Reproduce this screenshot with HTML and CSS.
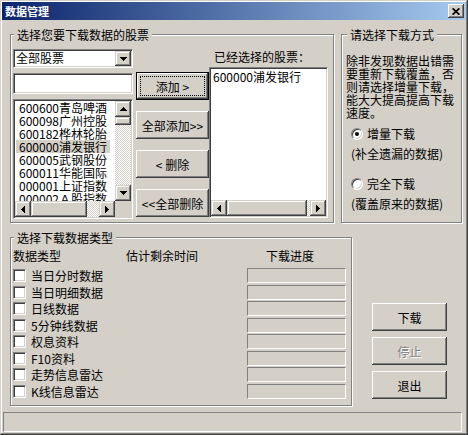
FILE: index.html
```html
<!DOCTYPE html>
<html lang="zh-CN">
<head>
<meta charset="utf-8">
<title>数据管理</title>
<link rel="stylesheet" href="styles.css">
</head>
<body>
<div class="window">
  <div class="titlebar">
    <span class="title">数据管理</span>
    <span class="close"><svg width="8" height="7" viewBox="0 0 8 7"><path d="M0.6 0.3 L7.4 6.7 M7.4 0.3 L0.6 6.7" stroke="#000" stroke-width="1.7" fill="none"/></svg></span>
  </div>

  <div class="top-row">
    <div class="group g-stocks">
      <div class="legend">选择您要下载数据的股票</div>
      <div class="stocks-body">
        <div class="col-left">
          <div class="combo">
            <span class="combo-text">全部股票</span>
            <span class="sb-btn combo-btn"><svg width="7" height="4" viewBox="0 0 7 4"><polygon points="0,0 7,0 3.5,4" fill="#000"/></svg></span>
          </div>
          <div class="edit"></div>
          <div class="listbox lb-left">
            <div class="lb-items">
              <div class="item">600600青岛啤酒</div>
              <div class="item">600098广州控股</div>
              <div class="item">600182桦林轮胎</div>
              <div class="item selected">600000浦发银行</div>
              <div class="item">600005武钢股份</div>
              <div class="item">600011华能国际</div>
              <div class="item">000001上证指数</div>
              <div class="item">000002Ａ股指数</div>
            </div>
            <div class="vscroll">
              <span class="sb-btn"><svg width="7" height="4" viewBox="0 0 7 4"><polygon points="3.5,0 7,4 0,4" fill="#000"/></svg></span>
              <span class="sb-thumb thumb-v"></span>
              <span class="sb-track"></span>
              <span class="sb-btn"><svg width="7" height="4" viewBox="0 0 7 4"><polygon points="0,0 7,0 3.5,4" fill="#000"/></svg></span>
            </div>
            <div class="hscroll">
              <span class="sb-btn"><svg width="4" height="7" viewBox="0 0 4 7"><polygon points="0,3.5 4,0 4,7" fill="#000"/></svg></span>
              <span class="sb-thumb thumb-left"></span>
              <span class="sb-track"></span>
              <span class="sb-btn"><svg width="4" height="7" viewBox="0 0 4 7"><polygon points="0,0 4,3.5 0,7" fill="#000"/></svg></span>
            </div>
            <div class="sb-corner"></div>
          </div>
        </div>

        <div class="col-buttons">
          <button class="btn default"><span class="focus">添加 &gt;</span></button>
          <button class="btn">全部添加&gt;&gt;</button>
          <button class="btn">&lt; 删除</button>
          <button class="btn">&lt;&lt;全部删除</button>
        </div>

        <div class="col-right">
          <div class="sel-label">已经选择的股票：</div>
          <div class="listbox lb-right">
            <div class="lb-items">
              <div class="item plain">600000浦发银行</div>
            </div>
            <div class="hscroll">
              <span class="sb-btn"><svg width="4" height="7" viewBox="0 0 4 7"><polygon points="0,3.5 4,0 4,7" fill="#000"/></svg></span>
              <span class="sb-thumb thumb-right"></span>
              <span class="sb-track"></span>
              <span class="sb-btn"><svg width="4" height="7" viewBox="0 0 4 7"><polygon points="0,0 4,3.5 0,7" fill="#000"/></svg></span>
            </div>
          </div>
        </div>
      </div>
    </div>

    <div class="group g-mode">
      <div class="legend legend-mode">请选择下载方式</div>
      <p class="mode-note">除非发现数据出错需<br>要重新下载覆盖，否<br>则请选择增量下载，<br>能大大提高提高下载<br>速度。</p>
      <div class="radio-row r1"><span class="radio checked"></span><span>增量下载</span></div>
      <div class="radio-desc d1">(补全遗漏的数据)</div>
      <div class="radio-row r2"><span class="radio"></span><span>完全下载</span></div>
      <div class="radio-desc d2">(覆盖原来的数据)</div>
    </div>
  </div>

  <div class="bottom-row">
    <div class="group g-types">
      <div class="legend">选择下载数据类型</div>
      <div class="types-head">
        <span class="h1">数据类型</span>
        <span class="h2">估计剩余时间</span>
        <span class="h3">下载进度</span>
      </div>
      <div class="types-grid">
        <div class="type"><span class="check"></span>当日分时数据</div><span class="bar"></span>
        <div class="type"><span class="check"></span>当日明细数据</div><span class="bar"></span>
        <div class="type"><span class="check"></span>日线数据</div><span class="bar"></span>
        <div class="type"><span class="check"></span>5分钟线数据</div><span class="bar"></span>
        <div class="type"><span class="check"></span>权息资料</div><span class="bar"></span>
        <div class="type"><span class="check"></span>F10资料</div><span class="bar"></span>
        <div class="type"><span class="check"></span>走势信息雷达</div><span class="bar"></span>
        <div class="type"><span class="check"></span>K线信息雷达</div><span class="bar"></span>
      </div>
    </div>

    <div class="actions">
      <button class="btn wide">下载</button>
      <button class="btn wide disabled">停止</button>
      <button class="btn wide">退出</button>
    </div>
  </div>

  <div class="statusbar"></div>
</div>
</body>
</html>
```

FILE: styles.css
```css
* { box-sizing: border-box; }

html, body {
  margin: 0;
  padding: 0;
}

body {
  width: 468px;
  height: 435px;
  overflow: hidden;
  background: #d4d0c8;
  color: #000;
  font-family: "Noto Sans CJK SC", "Noto Sans", sans-serif;
  font-size: 12px;
  line-height: 13px;
}

.window {
  width: 468px;
  height: 435px;
  padding: 2px;
  background: #d4d0c8;
  display: flex;
  flex-direction: column;
  box-shadow: inset -1px -1px #404040, inset 1px 1px #d4d0c8,
              inset -2px -2px #808080, inset 2px 2px #fff;
}

/* ---------- title bar ---------- */
.titlebar {
  flex: none;
  height: 18px;
  display: flex;
  align-items: center;
  background: linear-gradient(to right, #0a246a, #a6caf0);
}

.title {
  color: #fff;
  font-weight: bold;
  font-size: 11px;
  padding-left: 3px;
  letter-spacing: 0;
}

.close {
  margin-left: auto;
  margin-right: 2px;
  width: 16px;
  height: 14px;
  display: flex;
  align-items: center;
  justify-content: center;
  background: #d4d0c8;
  box-shadow: inset -1px -1px #404040, inset 1px 1px #fff,
              inset -2px -2px #808080, inset 2px 2px #d4d0c8;
}

.close svg { display: block; }

/* ---------- group boxes ---------- */
.group {
  border: 1px solid #808080;
  box-shadow: inset 1px 1px #fff, 1px 1px #fff;
}

.legend {
  width: max-content;
  height: 13px;
  margin: -7px 0 0 3px;
  padding: 0 3px;
  background: #d4d0c8;
}

.legend-mode { margin-left: 5px; }

.top-row {
  display: flex;
  gap: 7px;
  margin: 14px 0 0 8px;
}

.g-stocks {
  width: 324px;
  height: 189px;
}

.g-mode {
  width: 121px;
  height: 189px;
}

.stocks-body {
  display: flex;
  align-items: flex-start;
  margin-top: 8px;
  padding-left: 2px;
}

/* ---------- sunken fields ---------- */
.combo, .edit, .listbox {
  background: #fff;
  border: 1px solid;
  border-color: #808080 #fff #fff #808080;
  box-shadow: inset 1px 1px #404040, inset -1px -1px #d4d0c8;
  padding: 1px;
}

.col-left {
  width: 120px;
  display: flex;
  flex-direction: column;
}

.combo {
  height: 19px;
  display: flex;
  align-items: stretch;
}

.combo-text {
  flex: 1;
  padding-left: 1px;
  line-height: 14px;
}

.combo-btn {
  width: 16px;
}

.edit {
  height: 21px;
  margin-top: 5px;
}

.listbox {
  display: grid;
}

.lb-left {
  width: 120px;
  height: 120px;
  margin-top: 5px;
  grid-template-columns: 1fr 16px;
  grid-template-rows: 1fr 16px;
}

.lb-items {
  overflow: hidden;
  white-space: nowrap;
  min-width: 0;
  min-height: 0;
}

.item {
  width: 94px;
  height: 13px;
  margin-left: 1px;
  padding-left: 3px;
}

.item.selected { background: #d4d0c8; }

.item.plain {
  margin-left: 0;
  padding-left: 2px;
  margin-top: 1px;
  width: auto;
}

/* ---------- scroll bars ---------- */
.vscroll {
  display: flex;
  flex-direction: column;
}

.hscroll {
  display: flex;
}

.sb-btn, .sb-thumb {
  flex: none;
  width: 16px;
  height: 16px;
  background: #d4d0c8;
  display: flex;
  align-items: center;
  justify-content: center;
  box-shadow: inset -1px -1px #404040, inset 1px 1px #d4d0c8,
              inset -2px -2px #808080, inset 2px 2px #fff;
}

.combo-btn { height: auto; }

.sb-btn svg { display: block; shape-rendering: crispEdges; }

.thumb-v { height: 8px; }
.thumb-left { width: 56px; }
.thumb-right { width: 80px; }

.sb-track {
  flex: 1;
  background: repeating-conic-gradient(#fff 0 25%, #d4d0c8 0 50%) 0 0 / 2px 2px;
}

.sb-corner { background: #d4d0c8; }

/* ---------- buttons ---------- */
.btn {
  width: 73px;
  height: 28px;
  padding: 0;
  border: 0;
  background: #d4d0c8;
  color: #000;
  font: inherit;
  line-height: 13px;
  display: flex;
  align-items: center;
  justify-content: center;
  box-shadow: inset -1px -1px #404040, inset 1px 1px #fff,
              inset -2px -2px #808080, inset 2px 2px #d4d0c8;
}

.btn.default {
  border: 1px solid #000;
  box-shadow: inset -1px -1px #404040, inset 1px 1px #fff,
              inset -2px -2px #808080, inset 2px 2px #d4d0c8;
  padding: 3px;
  align-items: stretch;
}

.focus {
  flex: 1;
  display: flex;
  align-items: center;
  justify-content: center;
  border: 1px dotted #000;
}

.col-buttons {
  display: flex;
  flex-direction: column;
  gap: 11px;
  margin-left: 3px;
  margin-top: 23px;
}

.col-right {
  width: 119px;
}

.sel-label {
  padding-left: 5px;
  margin-top: 1px;
  height: 13px;
}

.lb-right {
  width: 119px;
  height: 151px;
  margin-top: 4px;
  grid-template-rows: 1fr 16px;
}

/* ---------- download mode ---------- */
.mode-note {
  margin: 13px 0 0 4px;
  white-space: nowrap;
}

.radio-row {
  display: flex;
  align-items: center;
  gap: 4px;
  height: 13px;
  padding-left: 9px;
}

.r1 { margin-top: 8px; }
.r2 { margin-top: 17px; }

.radio-desc {
  padding-left: 9px;
  height: 13px;
  margin-top: 7px;
}

.radio {
  width: 12px;
  height: 12px;
  border-radius: 50%;
  background: #fff;
  border: 1px solid;
  border-color: #808080 #fff #fff #808080;
  box-shadow: inset 1px 1px #404040, inset -1px -1px #d4d0c8;
  display: flex;
  align-items: center;
  justify-content: center;
}

.radio.checked::after {
  content: "";
  width: 4px;
  height: 4px;
  border-radius: 50%;
  background: #000;
}

/* ---------- data types ---------- */
.bottom-row {
  display: flex;
  align-items: flex-start;
  margin: 14px 0 0 8px;
}

.g-types {
  width: 342px;
  height: 169px;
}

.types-head {
  display: flex;
  margin-top: 5px;
  padding-left: 2px;
  height: 13px;
}

.h1 { width: 113px; }
.h2 { width: 140px; }

.types-grid {
  display: grid;
  grid-template-columns: 234px 99px;
  grid-template-rows: 17px 16px 17px 16px 17px 16px 17px 16px;
  margin-top: 7px;
  padding-left: 2px;
}

.type {
  display: flex;
  align-items: flex-start;
  gap: 5px;
  height: 13px;
}

.check {
  flex: none;
  width: 13px;
  height: 13px;
  background: #fff;
  border: 1px solid;
  border-color: #808080 #fff #fff #808080;
  box-shadow: inset 1px 1px #404040, inset -1px -1px #d4d0c8;
}

.bar {
  height: 15px;
  margin-top: -1px;
  border: 1px solid;
  border-color: #808080 #fff #fff #808080;
}

/* ---------- action buttons ---------- */
.actions {
  display: flex;
  flex-direction: column;
  gap: 6px;
  margin: 66px 0 0 20px;
}

.btn.wide { width: 75px; }

.btn.disabled {
  color: #808080;
  text-shadow: 1px 1px #fff;
}

/* ---------- status bar ---------- */
.statusbar {
  width: 459px;
  height: 20px;
  margin: 6px 0 0 1px;
  border: 1px solid;
  border-color: #808080 #fff #fff #808080;
}
```
